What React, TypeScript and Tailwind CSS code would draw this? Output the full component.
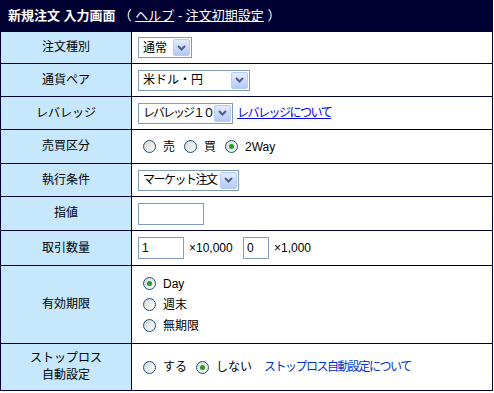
import React from 'react';

const font = { fontFamily: '"Liberation Sans", "Noto Sans CJK JP", sans-serif' };

const Chevron: React.FC = () => (
  <span className="flex h-[17px] w-[17px] shrink-0 items-center justify-center rounded-[2px] border border-[#b8cbf5] bg-gradient-to-b from-[#e3ebfd] to-[#b5c9f7]">
    <svg width="9" height="6" viewBox="0 0 9 6">
      <path d="M1 1 L4.5 4.5 L8 1" fill="none" stroke="#4d6185" strokeWidth="2" />
    </svg>
  </span>
);

const Select: React.FC<{ label: string; width: string; tight?: string }> = ({ label, width, tight = '' }) => (
  <div className={`flex h-[21px] items-center justify-between border border-[#7f9db9] bg-white pl-[4px] pr-[1px] ${width}`}>
    <span className={`whitespace-nowrap text-[12px] leading-none text-black ${tight}`}>{label}</span>
    <Chevron />
  </div>
);

const Radio: React.FC<{ checked?: boolean }> = ({ checked }) => (
  <span className="flex h-[13px] w-[13px] shrink-0 items-center justify-center rounded-full border border-[#1c5180] bg-gradient-to-br from-[#d6d6d0] to-white">
    {checked && <span className="h-[5px] w-[5px] rounded-full bg-[#21a121]" />}
  </span>
);

const Opt: React.FC<{ label: string; checked?: boolean }> = ({ label, checked }) => (
  <span className="flex items-center gap-[7px]">
    <Radio checked={checked} />
    <span className="text-[12px] leading-none">{label}</span>
  </span>
);

const Input: React.FC<{ value?: string; width: string }> = ({ value, width }) => (
  <div className={`flex h-[22px] items-center border border-[#7f9db9] bg-white px-[3px] text-[12px] ${width}`}>
    {value}
  </div>
);

const rows: { label: React.ReactNode; h: string; content: React.ReactNode }[] = [
  { label: '注文種別', h: 'h-[32px]', content: <Select label="通常" width="w-[54px]" /> },
  { label: '通貨ペア', h: 'h-[33px]', content: <Select label="米ドル・円" width="w-[112px]" /> },
  {
    label: 'レバレッジ',
    h: 'h-[33px]',
    content: (
      <div className="flex items-center gap-[4px]">
        <Select label="レバレッジ１０" width="w-[95px]" tight="tracking-[-2px]" />
        <a className="whitespace-nowrap text-[12px] tracking-[-1.5px] text-[#0000ee] underline">レバレッジについて</a>
      </div>
    ),
  },
  {
    label: '売買区分',
    h: 'h-[34px]',
    content: (
      <div className="flex items-center gap-[9px] pl-[5px]">
        <Opt label="売" />
        <Opt label="買" />
        <Opt label="2Way" checked />
      </div>
    ),
  },
  { label: '執行条件', h: 'h-[33px]', content: <Select label="マーケット注文" width="w-[101px]" tight="tracking-[-1.5px]" /> },
  { label: '指値', h: 'h-[34px]', content: <Input width="w-[66px]" /> },
  {
    label: '取引数量',
    h: 'h-[35px]',
    content: (
      <div className="flex items-center text-[12px]">
        <Input value="1" width="w-[46px]" />
        <span className="ml-[5px] w-[54px]">×10,000</span>
        <Input value="0" width="w-[26px]" />
        <span className="ml-[5px]">×1,000</span>
      </div>
    ),
  },
  {
    label: '有効期限',
    h: 'h-[78px]',
    content: (
      <div className="flex flex-col gap-[8px] pl-[5px]">
        <Opt label="Day" checked />
        <Opt label="週末" />
        <Opt label="無期限" />
      </div>
    ),
  },
  {
    label: (
      <>
        ストップロス
        <br />
        自動設定
      </>
    ),
    h: 'h-[47px]',
    content: (
      <div className="flex items-center gap-[9px] pl-[5px]">
        <Opt label="する" />
        <Opt label="しない" checked />
        <span className="ml-[3px] whitespace-nowrap text-[12px] tracking-[-1.5px] text-[#0033cc]">ストップロス自動設定について</span>
      </div>
    ),
  },
];

export default function App() {
  return (
    <div className="h-[393px] w-[494px] bg-white" style={font}>
      <div className="w-[493px] border-x border-[#000033]">
        <div className="flex h-[32px] items-center bg-[#000033] pl-[7px] text-[13px] text-white">
          <span className="font-bold">新規注文 入力画面</span>
          <span className="ml-[3px]">
            （ <a className="underline">ヘルプ</a> - <a className="underline">注文初期設定</a> ）
          </span>
        </div>
        {rows.map((r, i) => (
          <div key={i} className={`flex ${r.h} border-b border-[#000033]`}>
            <div className="flex w-[131px] shrink-0 items-center justify-center border-r border-[#000033] bg-[#c6e7fc] text-center text-[12px] leading-[17px] text-black">
              <div>{r.label}</div>
            </div>
            <div className="flex flex-1 items-center pl-[6px] text-black">{r.content}</div>
          </div>
        ))}
      </div>
    </div>
  );
}
